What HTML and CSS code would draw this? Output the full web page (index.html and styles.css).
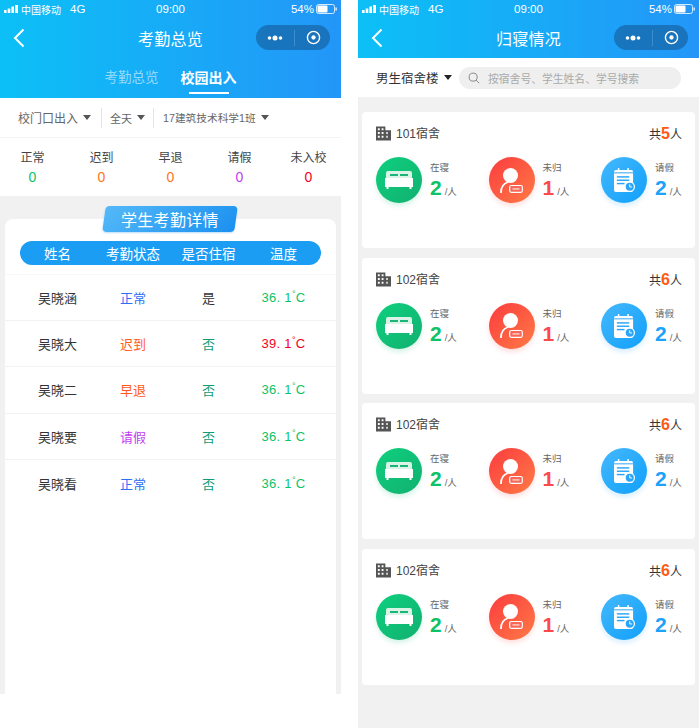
FILE: index.html
```html
<!DOCTYPE html>
<html lang="zh-CN">
<head>
  <meta charset="UTF-8" />
  <title>考勤总览</title>
  <link rel="stylesheet" href="styles.css">
</head>
<body>

<!-- shared icons -->
<svg class="defs" width="0" height="0">
  <symbol id="signal" viewBox="0 0 14 8">
    <rect x="0" y="5" width="2.600" height="3" fill="#fff"/>
    <rect x="3.700" y="3.500" width="2.600" height="4.500" fill="#fff"/>
    <rect x="7.400" y="1.500" width="2.600" height="6.500" fill="#fff"/>
    <rect x="11.100" y="0" width="2.900" height="8" fill="#fff"/>
  </symbol>
  <symbol id="battery" viewBox="0 0 22 10">
    <rect x="0.500" y="0.500" width="18" height="9" rx="2" fill="none" stroke="#fff" stroke-width="0.800"/>
    <rect x="1.500" y="1.500" width="10" height="7" rx="1" fill="#fff"/>
    <rect x="19.500" y="3.500" width="1.200" height="3" fill="#fff"/>
  </symbol>
  <symbol id="back" viewBox="0 0 12 20">
    <path d="M10.500 1.500 2 10l8.500 8.500" fill="none" stroke="#fff" stroke-width="2"/>
  </symbol>
  <symbol id="building" viewBox="0 0 16 15">
    <path fill="#555" fill-rule="evenodd" d="M0 0h10v4h6v11H0zM2 2v2h2V2zm4 0v2h2V2zM2 6v2h2V6zm4 0v2h2V6zm5 0v2h1.500V6zM2 10v2h2v-2zm4 0v2h2v-2zm5 0v2h1.500v-2z"/>
  </symbol>
  <symbol id="bed" viewBox="0 0 28 18">
    <path fill="#d9f3e7" d="M3 0h22a2 2 0 0 1 2 2v8H1V2a2 2 0 0 1 2-2z"/>
    <rect x="5" y="3" width="8" height="2" fill="#19b678"/>
    <rect x="15" y="3" width="8" height="2" fill="#19b678"/>
    <path fill="#fff" d="M0 7h28v9H0z"/>
    <rect x="1.500" y="16" width="2" height="2" fill="#fff"/>
    <rect x="24.500" y="16" width="2" height="2" fill="#fff"/>
  </symbol>
  <symbol id="person" viewBox="0 0 23 25">
    <circle cx="10.500" cy="7.500" r="7.500" fill="#fff"/>
    <path d="M1 24.500c0-5 2.500-9 7-10.500" fill="none" stroke="#fff" stroke-width="1.800" stroke-linecap="round"/>
    <rect x="9.700" y="17.500" width="12.600" height="6.800" rx="1.500" fill="#f9675a" stroke="#fff" stroke-width="1.200"/>
    <rect x="12.500" y="20" width="7" height="1.800" fill="#fbb9ae"/>
  </symbol>
  <symbol id="note" viewBox="0 0 22 25">
    <path fill="#fff" d="M2 2h16a2 2 0 0 1 2 2v19a2 2 0 0 1-2 2H2a2 2 0 0 1-2-2V4a2 2 0 0 1 2-2z"/>
    <rect x="4" y="0" width="1.600" height="4" fill="#fff"/>
    <rect x="14" y="0" width="1.600" height="4" fill="#fff"/>
    <g fill="#2aa5f8">
      <rect x="0" y="4.500" width="20" height="1"/>
      <rect x="3" y="8.500" width="13" height="1.500"/>
      <rect x="3" y="12" width="13" height="1.500"/>
      <rect x="3" y="15.500" width="8" height="1.500"/>
    </g>
    <circle cx="16.500" cy="19.500" r="5.500" fill="#fff"/>
    <circle cx="16.500" cy="19.500" r="4.200" fill="#2aa5f8"/>
    <path d="M16.500 17v2.800h2.300" fill="none" stroke="#fff" stroke-width="1"/>
  </symbol>
  <symbol id="capsule-dots" viewBox="0 0 16 6">
    <circle cx="2.500" cy="3" r="1.800" fill="#fff"/>
    <circle cx="8" cy="3" r="2.500" fill="#fff"/>
    <circle cx="13.500" cy="3" r="1.800" fill="#fff"/>
  </symbol>
  <symbol id="capsule-ring" viewBox="0 0 16 16">
    <circle cx="8" cy="8" r="6.500" fill="none" stroke="#fff" stroke-width="1.500"/>
    <circle cx="8" cy="8" r="2.300" fill="#fff"/>
  </symbol>
</svg>

<div class="screens">

  <!-- left screen -->
  <section class="phone phone-left">
    <header class="top top-tall">
      <div class="status">
        <span class="status-side"><svg class="signal"><use href="#signal"/></svg>中国移动<span class="net">4G</span></span>
        <span class="status-time">09:00</span>
        <span class="status-side status-right">54%<svg class="battery"><use href="#battery"/></svg></span>
      </div>
      <div class="nav">
        <svg class="back"><use href="#back"/></svg>
        <h1>考勤总览</h1>
        <div class="capsule">
          <svg class="dots"><use href="#capsule-dots"/></svg>
          <i class="capsule-line"></i>
          <svg class="ring"><use href="#capsule-ring"/></svg>
        </div>
      </div>
      <div class="tabs">
        <span class="tab">考勤总览</span>
        <span class="tab tab-on">校园出入</span>
      </div>
    </header>

    <div class="filters">
      <span class="filter">校门口出入<i class="caret"></i></span>
      <span class="filter filter-day">全天<i class="caret"></i></span>
      <span class="filter filter-class">17建筑技术科学1班<i class="caret"></i></span>
    </div>

    <div class="stats">
      <div class="stat">正常<b class="green">0</b></div>
      <div class="stat">迟到<b class="orange">0</b></div>
      <div class="stat">早退<b class="orange">0</b></div>
      <div class="stat">请假<b class="purple">0</b></div>
      <div class="stat">未入校<b class="red">0</b></div>
    </div>

    <div class="detail-wrap">
      <div class="detail">
        <div class="badge"><span>学生考勤详情</span></div>
        <div class="thead">
          <span>姓名</span><span>考勤状态</span><span>是否住宿</span><span>温度</span>
        </div>
        <div class="row">
          <span>吴晓涵</span><span class="blue">正常</span><span>是</span><span class="green temp">36. 1<sup>°</sup>C</span>
        </div>
        <div class="row">
          <span>吴晓大</span><span class="orange-red">迟到</span><span class="teal">否</span><span class="red temp">39. 1<sup>°</sup>C</span>
        </div>
        <div class="row">
          <span>吴晓二</span><span class="orange-red">早退</span><span class="teal">否</span><span class="green temp">36. 1<sup>°</sup>C</span>
        </div>
        <div class="row">
          <span>吴晓要</span><span class="purple">请假</span><span class="teal">否</span><span class="green temp">36. 1<sup>°</sup>C</span>
        </div>
        <div class="row">
          <span>吴晓看</span><span class="blue">正常</span><span class="teal">否</span><span class="green temp">36. 1<sup>°</sup>C</span>
        </div>
      </div>
    </div>
  </section>

  <!-- right screen -->
  <section class="phone phone-right">
    <header class="top">
      <div class="status">
        <span class="status-side"><svg class="signal"><use href="#signal"/></svg>中国移动<span class="net">4G</span></span>
        <span class="status-time">09:00</span>
        <span class="status-side status-right">54%<svg class="battery"><use href="#battery"/></svg></span>
      </div>
      <div class="nav">
        <svg class="back"><use href="#back"/></svg>
        <h1>归寝情况</h1>
        <div class="capsule">
          <svg class="dots"><use href="#capsule-dots"/></svg>
          <i class="capsule-line"></i>
          <svg class="ring"><use href="#capsule-ring"/></svg>
        </div>
      </div>
    </header>

    <div class="searchbar">
      <span class="building-select">男生宿舍楼<i class="caret caret-dark"></i></span>
      <div class="search">
        <svg class="search-icon" viewBox="0 0 14 14"><circle cx="6" cy="6" r="4.700" fill="none" stroke="#777" stroke-width="1"/><path d="M9.500 9.500 13 13" stroke="#777" stroke-width="1"/></svg>
        按宿舍号、学生姓名、学号搜索
      </div>
    </div>

    <div class="rooms">
      <article class="room">
        <div class="room-head">
          <span class="room-name"><svg class="building"><use href="#building"/></svg>101宿舍</span>
          <span class="room-total">共<b>5</b>人</span>
        </div>
        <div class="room-stats">
          <div class="rs"><span class="circle c-green"><svg class="ic-bed"><use href="#bed"/></svg></span><div class="rs-text">在寝<p><b class="green">2</b>/人</p></div></div>
          <div class="rs"><span class="circle c-red"><svg class="ic-person"><use href="#person"/></svg></span><div class="rs-text">未归<p><b class="coral">1</b>/人</p></div></div>
          <div class="rs"><span class="circle c-blue"><svg class="ic-note"><use href="#note"/></svg></span><div class="rs-text">请假<p><b class="sky">2</b>/人</p></div></div>
        </div>
      </article>

      <article class="room">
        <div class="room-head">
          <span class="room-name"><svg class="building"><use href="#building"/></svg>102宿舍</span>
          <span class="room-total">共<b>6</b>人</span>
        </div>
        <div class="room-stats">
          <div class="rs"><span class="circle c-green"><svg class="ic-bed"><use href="#bed"/></svg></span><div class="rs-text">在寝<p><b class="green">2</b>/人</p></div></div>
          <div class="rs"><span class="circle c-red"><svg class="ic-person"><use href="#person"/></svg></span><div class="rs-text">未归<p><b class="coral">1</b>/人</p></div></div>
          <div class="rs"><span class="circle c-blue"><svg class="ic-note"><use href="#note"/></svg></span><div class="rs-text">请假<p><b class="sky">2</b>/人</p></div></div>
        </div>
      </article>

      <article class="room">
        <div class="room-head">
          <span class="room-name"><svg class="building"><use href="#building"/></svg>102宿舍</span>
          <span class="room-total">共<b>6</b>人</span>
        </div>
        <div class="room-stats">
          <div class="rs"><span class="circle c-green"><svg class="ic-bed"><use href="#bed"/></svg></span><div class="rs-text">在寝<p><b class="green">2</b>/人</p></div></div>
          <div class="rs"><span class="circle c-red"><svg class="ic-person"><use href="#person"/></svg></span><div class="rs-text">未归<p><b class="coral">1</b>/人</p></div></div>
          <div class="rs"><span class="circle c-blue"><svg class="ic-note"><use href="#note"/></svg></span><div class="rs-text">请假<p><b class="sky">2</b>/人</p></div></div>
        </div>
      </article>

      <article class="room">
        <div class="room-head">
          <span class="room-name"><svg class="building"><use href="#building"/></svg>102宿舍</span>
          <span class="room-total">共<b>6</b>人</span>
        </div>
        <div class="room-stats">
          <div class="rs"><span class="circle c-green"><svg class="ic-bed"><use href="#bed"/></svg></span><div class="rs-text">在寝<p><b class="green">2</b>/人</p></div></div>
          <div class="rs"><span class="circle c-red"><svg class="ic-person"><use href="#person"/></svg></span><div class="rs-text">未归<p><b class="coral">1</b>/人</p></div></div>
          <div class="rs"><span class="circle c-blue"><svg class="ic-note"><use href="#note"/></svg></span><div class="rs-text">请假<p><b class="sky">2</b>/人</p></div></div>
        </div>
      </article>
    </div>
  </section>

</div>

</body>
</html>
```

FILE: styles.css
```css
* { margin: 0; padding: 0; box-sizing: border-box; }
html, body {
  height: 100%;
  background: #fff;
  font-family: "Liberation Sans", "Noto Sans CJK SC", sans-serif;
  color: #333;
  overflow: hidden;
}
i { font-style: normal; }

.defs { position: absolute; }

.screens {
  display: flex;
  justify-content: space-between;
  width: 699px;
  height: 728px;
}

.phone {
  width: 341px;
  display: flex;
  flex-direction: column;
  background: #f1f1f1;
}
.phone-left { height: 694px; }
.phone-right { height: 728px; }

/* blue header */
.top {
  height: 58px;
  background: linear-gradient(90deg, #0cc0f6, #2396f8);
  color: #fff;
  flex: none;
}
.top-tall { height: 98px; }

.status {
  height: 18px;
  display: flex;
  align-items: center;
  justify-content: space-between;
  position: relative;
  padding: 0 3px 0 4px;
  font-size: 10px;
}
.status-side { display: flex; align-items: center; gap: 3px; }
.status-right { gap: 2px; font-size: 11.500px; }
.status-time {
  position: absolute;
  left: 0;
  right: 0;
  text-align: center;
  font-size: 11.500px;
}
.net { margin-left: 6px; font-size: 11.500px; }
.signal { width: 14px; height: 8px; }
.battery { width: 22px; height: 10px; }

.nav {
  height: 40px;
  display: flex;
  align-items: center;
  justify-content: center;
  position: relative;
}
.nav h1 { font-size: 16px; font-weight: 400; letter-spacing: 0.3px; }
.back {
  position: absolute;
  left: 13px;
  top: 10px;
  width: 12px;
  height: 20px;
}
.capsule {
  position: absolute;
  right: 11px;
  top: 7px;
  width: 74px;
  height: 25px;
  border-radius: 13px;
  background: rgba(20, 90, 150, 0.6);
  display: flex;
  align-items: center;
  padding-left: 11px;
}
.dots { width: 16px; height: 6px; }
.capsule-line {
  width: 1px;
  height: 16px;
  background: rgba(255, 255, 255, 0.18);
  margin: 0 11px;
}
.ring { width: 15px; height: 15px; }

.tabs {
  height: 40px;
  display: flex;
  justify-content: center;
  gap: 22px;
}
.tab {
  font-size: 13.500px;
  line-height: 40px;
  height: 35px;
  color: rgba(255, 255, 255, 0.55);
  position: relative;
}
.tab-on { color: #fff; font-weight: 700; font-size: 14px; }
.tab-on::after {
  content: "";
  position: absolute;
  left: 8px;
  right: 8px;
  bottom: -1px;
  height: 2px;
  background: #fff;
}

/* filter bar */
.filters {
  height: 40px;
  background: #fff;
  display: flex;
  align-items: center;
  padding-left: 18px;
  border-bottom: 1px solid #f4f4f4;
  flex: none;
  font-size: 12px;
  color: #666;
}
.filter {
  display: flex;
  align-items: center;
  padding-right: 10px;
  margin-right: 8px;
  border-right: 1px solid #e4e4e4;
  height: 20px;
}
.filter:last-child { border-right: 0; }
.filter-day { font-size: 11px; padding-right: 8px; margin-right: 9px; }
.filter-class { font-size: 10.700px; }
.caret {
  width: 0;
  height: 0;
  margin-left: 5px;
  border-left: 4px solid transparent;
  border-right: 4px solid transparent;
  border-top: 5px solid #555;
}
.caret-dark { border-top-color: #222; margin-left: 5px; }

.stats {
  height: 58px;
  background: #fff;
  display: grid;
  grid-template-columns: repeat(5, 69px);
  justify-content: center;
  flex: none;
}
.stat {
  display: flex;
  flex-direction: column;
  align-items: center;
  font-size: 12px;
  padding-top: 11px;
  line-height: 18px;
  color: #444;
}
.stat b { font-weight: 400; font-size: 14px; line-height: 20px; }

.green { color: #0ec268; }
.orange { color: #ff7320; }
.orange-red { color: #ff5a1f; }
.purple { color: #c43cf0; }
.red { color: #f5001c; }
.blue { color: #2a6ff5; }
.teal { color: #0e9c76; }
.coral { color: #fb4a4d; }
.sky { color: #1ba3fb; }

/* detail table */
.detail-wrap { flex: 1; padding: 23px 5px 0; }
.detail {
  height: 100%;
  background: #fff;
  border-radius: 8px 8px 0 0;
  position: relative;
  padding-top: 22px;
}
.badge {
  position: absolute;
  left: 99px;
  top: -13px;
  width: 132px;
  height: 26px;
  background: linear-gradient(135deg, #54b9f8, #1b90f0);
  border-radius: 4px;
  transform: skewX(-8deg);
  display: flex;
  align-items: center;
  justify-content: center;
  box-shadow: 0 1px 2px rgba(30, 140, 230, 0.3);
}
.badge span {
  transform: skewX(8deg);
  color: #fff;
  font-size: 16px;
  letter-spacing: 0.3px;
}
.thead {
  margin: 0 15px 9px;
  height: 24px;
  border-radius: 12px;
  background: #1c9df4;
  color: #fff;
  font-size: 13.500px;
  display: grid;
  grid-template-columns: 75px 76px 75px 75px;
  align-items: center;
  text-align: center;
}
.row {
  height: 46.500px;
  border-bottom: 1px solid #f2f2f2;
  padding: 0 15px;
  display: grid;
  grid-template-columns: 75px 76px 75px 75px;
  align-items: center;
  text-align: center;
  font-size: 13px;
  color: #333;
}
.thead + .row { border-top: 1px solid #f8f8f8; }
.row:last-child { border-bottom: 0; }
.temp { letter-spacing: 0.3px; }
.temp sup { font-size: 9px; line-height: 0; }

/* search row */
.searchbar {
  height: 39px;
  background: #fff;
  display: flex;
  align-items: center;
  padding-left: 18px;
  flex: none;
}
.building-select {
  display: flex;
  align-items: center;
  font-size: 12.500px;
  color: #333;
  width: 83px;
}
.search {
  width: 222px;
  height: 22px;
  border-radius: 11px;
  background: #efefef;
  display: flex;
  align-items: center;
  font-size: 10.800px;
  color: #aaa;
  padding-left: 9px;
  gap: 8px;
}
.search-icon { width: 12px; height: 12px; }

/* room cards */
.rooms {
  display: flex;
  flex-direction: column;
  gap: 9.500px;
  padding: 15px 4px 0;
}
.room {
  height: 136px;
  background: #fff;
  border-radius: 4px;
  padding: 12px 13px 0 14px;
}
.room-head {
  display: flex;
  justify-content: space-between;
  align-items: center;
  height: 20px;
}
.room-name {
  display: flex;
  align-items: center;
  font-size: 12px;
  line-height: 18px;
  color: #444;
  gap: 5px;
}
.building { width: 15px; height: 15px; margin-top: -1px; }
.room-total { font-size: 12px; color: #333; }
.room-total b { color: #ff5a12; font-size: 16px; font-weight: 700; }

.room-stats {
  display: flex;
  margin-top: 13px;
}
.rs { width: 112.500px; display: flex; flex: none; }
.circle {
  width: 46px;
  height: 46px;
  border-radius: 50%;
  display: flex;
  align-items: center;
  justify-content: center;
  flex: none;
}
.c-green { background: linear-gradient(135deg, #0ed07e, #12b070); box-shadow: 0 3px 5px rgba(20, 190, 120, 0.18); }
.c-red { background: linear-gradient(135deg, #fb3c3f, #ff7a45); box-shadow: 0 3px 5px rgba(250, 80, 70, 0.18); }
.c-blue { background: linear-gradient(135deg, #45b8fb, #10a0fb); box-shadow: 0 3px 5px rgba(40, 160, 250, 0.18); }
.ic-bed { width: 28px; height: 18px; }
.ic-person { width: 23px; height: 25px; }
.ic-note { width: 21px; height: 24px; }
.rs-text {
  margin-left: 8px;
  font-size: 9.500px;
  color: #666;
  padding-top: 4px;
  line-height: 14px;
}
.rs-text p { line-height: 20px; margin-top: 3px; white-space: nowrap; }
.rs-text b { font-size: 21px; font-weight: 700; margin-right: 3px; }
```
